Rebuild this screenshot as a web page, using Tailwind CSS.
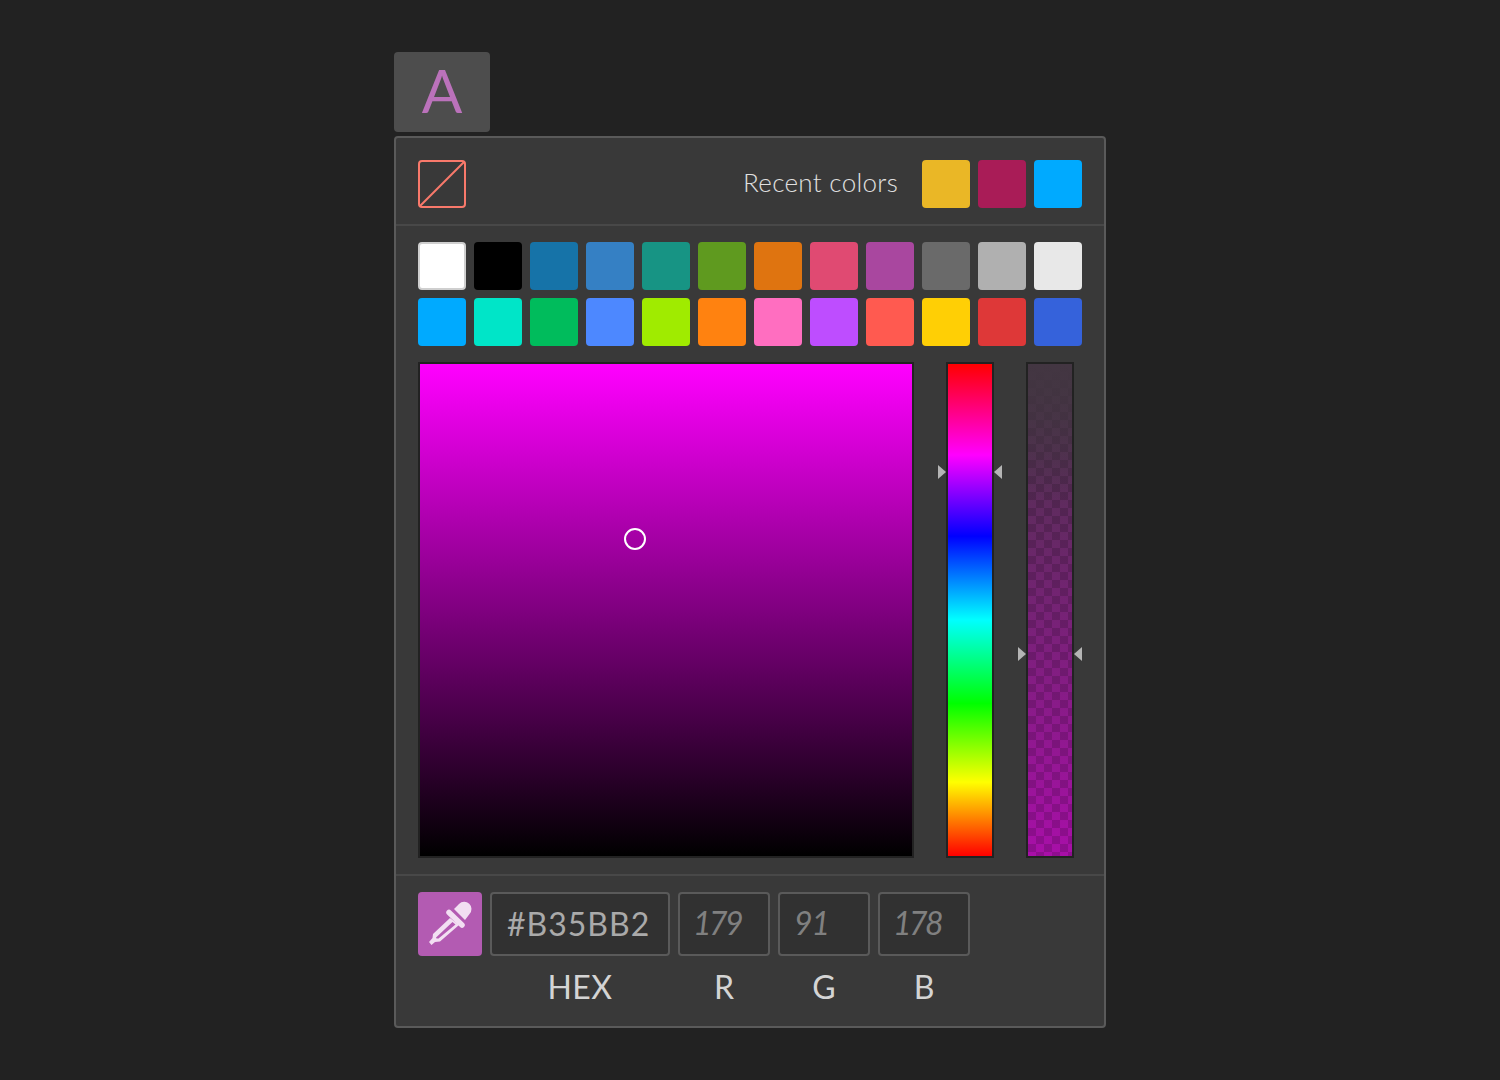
<!DOCTYPE html>
<html lang="en">
<head>
  <meta charset="UTF-8" />
  <title>Color picker</title>
  <script src="https://cdn.jsdelivr.net/npm/@tailwindcss/browser@4"></script>
</head>
<body class="bg-[#222222] font-['Lato',sans-serif] h-[1080px] overflow-hidden">
  <div class="w-[712px] mx-auto pt-[52px]">

    <!-- Text color toggle -->
    <div class="w-[96px] h-[80px] mb-[4px] pb-1 bg-[#4d4d4d] rounded flex items-center justify-center text-[60px] leading-none text-[#bb72bb]">A</div>

    <div class="h-[892px] bg-[#393939] border-2 border-[#5a5a5a] rounded">

      <!-- Header -->
      <div class="h-[88px] px-[22px] pt-[22px] border-b-2 border-[#484848] flex items-start justify-between">
        <svg width="48" height="48" viewBox="0 0 48 48" fill="none" stroke="#f9796b" stroke-width="2">
          <rect x="1" y="1" width="46" height="46" rx="3" />
          <path d="M2 46 46 2" />
        </svg>
        <div class="flex items-center gap-2">
          <span class="text-[26px] font-light tracking-[0.3px] pb-[3px] text-[#e0e0e0] mr-4">Recent colors</span>
          <div class="w-12 h-12 rounded bg-[#eab726]"></div>
          <div class="w-12 h-12 rounded bg-[#a91c57]"></div>
          <div class="w-12 h-12 rounded bg-[#00aaff]"></div>
        </div>
      </div>

      <!-- Swatches -->
      <div class="px-[22px] pt-4 grid grid-cols-[repeat(12,48px)] gap-2">
        <div class="h-12 rounded bg-white border-2 border-[#cfcfcf]"></div>
        <div class="h-12 rounded bg-black"></div>
        <div class="h-12 rounded bg-[#1673a8]"></div>
        <div class="h-12 rounded bg-[#3580c4]"></div>
        <div class="h-12 rounded bg-[#179484]"></div>
        <div class="h-12 rounded bg-[#5f9a1f]"></div>
        <div class="h-12 rounded bg-[#df7410]"></div>
        <div class="h-12 rounded bg-[#e04a72]"></div>
        <div class="h-12 rounded bg-[#a9479f]"></div>
        <div class="h-12 rounded bg-[#6a6a6a]"></div>
        <div class="h-12 rounded bg-[#b0b0b0]"></div>
        <div class="h-12 rounded bg-[#e8e8e8]"></div>
        <div class="h-12 rounded bg-[#00aaff]"></div>
        <div class="h-12 rounded bg-[#00e5c8]"></div>
        <div class="h-12 rounded bg-[#00bc5c]"></div>
        <div class="h-12 rounded bg-[#4d88ff]"></div>
        <div class="h-12 rounded bg-[#a0eb00]"></div>
        <div class="h-12 rounded bg-[#ff8210]"></div>
        <div class="h-12 rounded bg-[#ff6ec0]"></div>
        <div class="h-12 rounded bg-[#be4dff]"></div>
        <div class="h-12 rounded bg-[#ff5a50]"></div>
        <div class="h-12 rounded bg-[#ffcf05]"></div>
        <div class="h-12 rounded bg-[#de3838]"></div>
        <div class="h-12 rounded bg-[#3562db]"></div>
      </div>

      <!-- Picker area -->
      <div class="px-[22px] pt-4 pb-4 flex border-b-2 border-[#484848]">
        <div class="relative w-[496px] h-[496px] border-2 border-[#222222] bg-[linear-gradient(to_bottom,#ff00ff,#000000)]">
          <div class="absolute left-[204px] top-[164px] w-[22px] h-[22px] rounded-full border-2 border-white"></div>
        </div>

        <div class="relative ml-8 w-12 h-[496px] border-2 border-[#222222] bg-[linear-gradient(to_bottom,#ff0000,#ff00ff_18.5%,#0000ff_35%,#00ffff_52%,#00ff00_69%,#ffff00_85%,#ff0000)]">
          <div class="absolute left-[-10px] top-[101px] border-y-[7px] border-y-transparent border-l-[8px] border-l-[#b5b5b5]"></div>
          <div class="absolute right-[-10px] top-[101px] border-y-[7px] border-y-transparent border-r-[8px] border-r-[#b5b5b5]"></div>
        </div>

        <div class="relative ml-8 w-12 h-[496px] border-2 border-[#222222] bg-[linear-gradient(to_bottom,#433642,#43364200_28%),conic-gradient(#0000_25%,#00000026_0_50%,#0000_0_75%,#00000026_0),linear-gradient(to_bottom,#433642,#a80fa8)] bg-[length:100%_100%,16px_16px,100%_100%]">
          <div class="absolute left-[-10px] top-[283px] border-y-[7px] border-y-transparent border-l-[8px] border-l-[#b5b5b5]"></div>
          <div class="absolute right-[-10px] top-[283px] border-y-[7px] border-y-transparent border-r-[8px] border-r-[#b5b5b5]"></div>
        </div>
      </div>

      <!-- Values -->
      <div class="px-[22px] pt-4 flex gap-2">
        <div class="w-16 h-16 rounded bg-[#b35bb2] flex items-center justify-center">
          <svg width="64" height="64" viewBox="0 0 64 64" fill="#f2dff2" class="shrink-0">
            <path d="M36 17 41 12A7 7 0 0 1 51.500 22L47 28z" />
            <path d="M31 20.500 44 33" fill="none" stroke="#f2dff2" stroke-width="5.500" stroke-linecap="round" />
            <path fill-rule="evenodd" d="M32 26 15 42 14.500 46 11 50 13.500 53 17 50 22 49.500 41 33zM34.500 30 18 45.500 18.500 46.500 20.500 46.500 37.500 32.500z" />
          </svg>
        </div>
        <div class="w-[180px]">
          <div class="h-16 rounded border-2 border-[#5a5a5a] bg-[#313131] pl-[15px] flex items-center text-[32px] tracking-[1px] text-[#aaaaaa]">#B35BB2</div>
          <div class="mt-[13px] text-center text-[32px] leading-[36px] tracking-[0.5px] text-[#d4d4d4]">HEX</div>
        </div>
        <div class="w-[92px]">
          <div class="h-16 rounded border-2 border-[#5a5a5a] bg-[#313131] pl-[13px] pb-[2px] flex items-center text-[32px] italic tracking-[-2.5px] text-[#808080]">179</div>
          <div class="mt-[13px] text-center text-[32px] leading-[36px] text-[#d4d4d4]">R</div>
        </div>
        <div class="w-[92px]">
          <div class="h-16 rounded border-2 border-[#5a5a5a] bg-[#313131] pl-[14px] pb-[2px] flex items-center text-[32px] italic tracking-[-1px] text-[#808080]">91</div>
          <div class="mt-[13px] text-center text-[32px] leading-[36px] text-[#d4d4d4]">G</div>
        </div>
        <div class="w-[92px]">
          <div class="h-16 rounded border-2 border-[#5a5a5a] bg-[#313131] pl-[13px] pb-[2px] flex items-center text-[32px] italic tracking-[-2.5px] text-[#808080]">178</div>
          <div class="mt-[13px] text-center text-[32px] leading-[36px] text-[#d4d4d4]">B</div>
        </div>
      </div>

    </div>
  </div>
</body>
</html>
